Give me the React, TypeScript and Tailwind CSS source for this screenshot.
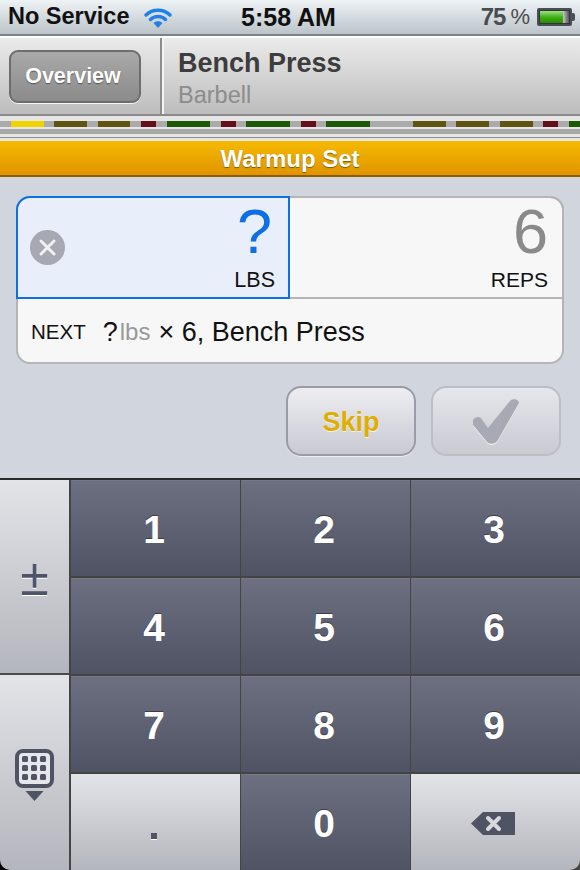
const segments = [
  "ml-[11px] w-[33px] bg-[#f0d400]",
  "ml-[10px] w-[33px] bg-[#5f5510]",
  "ml-[11px] w-[32px] bg-[#5f5510]",
  "ml-[11px] w-[15px] bg-[#650f1c]",
  "ml-[11px] w-[43px] bg-[#1c5a06]",
  "ml-[11px] w-[15px] bg-[#650f1c]",
  "ml-[10px] w-[44px] bg-[#1c5a06]",
  "ml-[11px] w-[15px] bg-[#650f1c]",
  "ml-[10px] w-[44px] bg-[#1c5a06]",
  "ml-[43px] w-[33px] bg-[#5f5510]",
  "ml-[10px] w-[33px] bg-[#5f5510]",
  "ml-[11px] w-[33px] bg-[#5f5510]",
  "ml-[10px] w-[15px] bg-[#650f1c]",
  "ml-[11px] w-[11px] bg-[#1c5a06]",
];

const darkKey =
  "flex items-center justify-center border-t border-t-[#767a88] bg-gradient-to-b from-[#6c7080] to-[#4f5364] pt-[4px] pr-[3px] text-[39px] font-bold text-white [text-shadow:0_-1px_0_#3a3d4a]";
const lightKey =
  "flex items-center justify-center bg-gradient-to-b from-[#e3e4e8] to-[#b4b6bd]";

function Wifi() {
  return (
    <svg width="30" height="23" viewBox="0 0 30 23" className="ml-[14px]">
      <path d="M3 9C9.500 2.500 20.500 2.500 27 9" fill="none" stroke="#1f80e8" strokeWidth="3.500" strokeLinecap="round" />
      <path d="M7.500 13.500C11.500 9.500 18.500 9.500 22.500 13.500" fill="none" stroke="#1f80e8" strokeWidth="3.500" strokeLinecap="round" />
      <path d="M10.500 17C13 14.500 17 14.500 19.500 17L15 22Z" fill="#1f80e8" />
    </svg>
  );
}

function Battery() {
  return (
    <div className="ml-[7px] flex items-center">
      <div className="flex h-[18px] w-[35px] rounded-[2px] border-2 border-[#4a4f55] bg-[#30343a] p-px">
        <div className="w-[23px] bg-gradient-to-b from-[#9be27a] via-[#3fb010] to-[#2c8a08]" />
        <div className="flex-1 bg-gradient-to-r from-[#c8c8c8] to-[#555]" />
      </div>
      <div className="h-[8px] w-[3px] rounded-r-[2px] bg-[#4a4f55]" />
    </div>
  );
}

function StatusBar() {
  return (
    <div className="relative flex h-[36px] items-center border-b-2 border-b-[#7d8286] bg-gradient-to-b from-[#eef3f6] to-[#bcc4c9] pl-[8px] pr-[5px]">
      <span className="text-[23.5px] font-bold leading-none text-[#111]">No Service</span>
      <Wifi />
      <span className="absolute left-[241px] top-[5px] text-[25px] font-bold leading-none text-[#111]">5:58 AM</span>
      <span className="ml-auto text-[24px] font-bold leading-none tracking-[-1px] text-[#4a4d50]">75</span>
      <span className="ml-[5px] text-[22px] leading-none text-[#4a4d50]">%</span>
      <Battery />
    </div>
  );
}

function Header() {
  return (
    <div className="flex h-[80px] border-t-2 border-b-2 border-t-white border-b-[#8a8a8a] bg-gradient-to-b from-[#ebebeb] to-[#bdbdbd]">
      <div className="flex w-[160px] items-center pl-[9px]">
        <button className="flex h-[53px] w-[132px] items-center justify-center rounded-[9px] border-2 border-[#6d6d6d] bg-gradient-to-b from-[#a9a9a9] to-[#8b8b8b] pr-[4px] text-[21.500px] font-bold text-white shadow-[0_1px_0_#f5f5f5] [text-shadow:0_1px_1px_#555]">
          Overview
        </button>
      </div>
      <div className="w-[2px] bg-[#8d8d8d]" />
      <div className="w-[2px] bg-[#f4f4f4]" />
      <div className="flex flex-col pl-[14px] pt-[9px]">
        <span className="text-[27px] font-bold leading-[33px] text-[#3d3d3d]">Bench Press</span>
        <span className="text-[23.500px] leading-[30px] text-[#8c8c8c]">Barbell</span>
      </div>
    </div>
  );
}

function Track() {
  return (
    <div className="flex h-[25px] flex-col bg-[#e6e6e6] pt-[5px]">
      <div className="flex h-[6px] bg-[#ababab]">
        {segments.map((cls, i) => (
          <div key={i} className={cls} />
        ))}
      </div>
      <div className="mt-[2px] h-[5px] bg-[#a8a8a8]" />
      <div className="mt-[3px] h-[1px] bg-[#8d8d8d]" />
    </div>
  );
}

function WarmupBar() {
  return (
    <div className="flex h-[36px] items-center justify-center border-b-2 border-b-[#8f5d00] bg-gradient-to-b from-[#f6ba00] to-[#e09400] pt-[1px] text-[24px] font-bold text-white [text-shadow:0_1px_1px_#7a5a10]">
      Warmup Set
    </div>
  );
}

function EntryCard() {
  return (
    <div className="mx-[16px] mt-[19px] h-[168px] rounded-[14px] border-2 border-[#b5b5b5] bg-[#f7f7f7]">
      <div className="-mx-[2px] -mt-[2px] flex h-[103px]">
        <div className="relative flex w-[274px] flex-col items-end rounded-tl-[14px] border-2 border-[#0e6ee6] bg-[#e9eefb] pr-[13px]">
          <div className="absolute left-[12px] top-[32px] flex h-[35px] w-[35px] items-center justify-center rounded-full bg-[#a6a9b2]">
            <svg width="19" height="19" viewBox="0 0 19 19">
              <path d="M3 3L16 16M16 3L3 16" stroke="#f0f1f4" strokeWidth="3" strokeLinecap="round" />
            </svg>
          </div>
          <span className="mr-[3px] mt-[-2px] h-[66px] text-[63px] font-normal leading-[70px] text-[#0e6ee6]">?</span>
          <span className="mt-[4px] text-[21.500px] leading-[28px] text-[#111]">LBS</span>
        </div>
        <div className="flex flex-1 flex-col items-end rounded-tr-[14px] border-y-2 border-r-2 border-y-[#b5b5b5] border-r-[#b5b5b5] pr-[14px]">
          <span className="mt-[-2px] h-[66px] text-[63px] leading-[70px] text-[#8a8a8a]">6</span>
          <span className="mt-[4px] text-[21px] leading-[28px] text-[#111]">REPS</span>
        </div>
      </div>
      <div className="flex h-[63px] items-center pl-[13px] pt-[3px]">
        <span className="text-[20.500px] text-[#111]">NEXT</span>
        <span className="ml-[17px] text-[27px] text-[#111]">?</span>
        <span className="ml-[2px] text-[24px] text-[#999]">lbs</span>
        <span className="ml-[8px] text-[27px] text-[#111]">× 6, Bench Press</span>
      </div>
    </div>
  );
}

function ActionButtons() {
  return (
    <div className="mr-[19px] mt-[22px] flex justify-end gap-[15px]">
      <button className="flex h-[70px] w-[130px] items-center justify-center rounded-[15px] border-2 border-[#9a9ba6] bg-gradient-to-b from-[#eeeef2] to-[#c8c9d2] pt-[2px] text-[27px] font-bold text-[#dfae00] shadow-[0_1px_0_#eceef2] [text-shadow:0_1px_0_#f5f5f5]">
        Skip
      </button>
      <button className="flex h-[70px] w-[130px] items-center justify-center rounded-[15px] border-2 border-[#bcbec6] bg-gradient-to-b from-[#e6e7ec] to-[#c9cad2]">
        <svg width="48" height="48" viewBox="0 0 48 48" className="drop-shadow-[0_1px_0_#f5f5f5]">
          <path d="M1 23C3 20 7 19 9 21L16 31L38 4C40 1 47 2 47 6L26 43C24 47 18 48 15 45L1 28Z" fill="#a8aab3" />
        </svg>
      </button>
    </div>
  );
}

function PlusMinusKey() {
  return (
    <div className={`${lightKey} h-[195px] border-b-2 border-b-[#4a4a4a]`}>
      <span className="text-[52px] leading-none text-[#4f5468] [text-shadow:0_1px_0_#fff]">±</span>
    </div>
  );
}

function KeyboardToggleKey() {
  return (
    <div className={`${lightKey} flex-1 flex-col pt-[5px]`}>
      <svg width="39" height="53" viewBox="0 0 39 53">
        <rect x="2" y="2" width="35" height="35" rx="6" fill="#e6e7eb" stroke="#4f5364" strokeWidth="4" />
        {[10, 19, 28].map((y) =>
          [10, 19, 28].map((x) => <rect key={`${x}-${y}`} x={x - 3} y={y - 3} width="6" height="6" rx="1.500" fill="#4f5364" />)
        )}
        <path d="M10.500 42H28.500L19.500 52Z" fill="#4f5364" />
      </svg>
    </div>
  );
}

function Keypad() {
  return (
    <div className="grid shrink-0 grid-cols-[169px_169px_169px] grid-rows-[98px_98px_98px_96px] gap-x-px bg-[#444]">
      {["1", "2", "3", "4", "5", "6", "7", "8", "9"].map((n) => (
        <div key={n} className={`${darkKey} border-b-2 border-b-[#444]`}>
          {n}
        </div>
      ))}
      <div className={lightKey}>
        <div className="mr-[3px] mt-[28px] h-[6px] w-[6px] bg-[#4f5364] shadow-[0_1px_0_#fff]" />
      </div>
      <div className={darkKey}>0</div>
      <div className={`${lightKey} rounded-br-[10px]`}>
        <svg width="44" height="24" viewBox="0 0 44 24" className="mr-[5px] mt-[3px]">
          <path d="M0 11.500L12 0H44V23H12Z" fill="#4f5364" />
          <path d="M17 6L28 17M28 6L17 17" stroke="#d8d9de" strokeWidth="4" strokeLinecap="round" />
        </svg>
      </div>
    </div>
  );
}

export default function App() {
  return (
    <div className="flex h-[870px] w-[580px] flex-col overflow-hidden bg-[#d1d5dd] font-['Liberation_Sans',sans-serif]">
      <StatusBar />
      <Header />
      <Track />
      <WarmupBar />
      <div className="h-[301px]">
        <EntryCard />
        <ActionButtons />
      </div>
      <div className="flex flex-1 border-t-2 border-t-[#2a2a2a] bg-black">
        <div className="flex w-[69px] shrink-0 flex-col overflow-hidden rounded-bl-[10px]">
          <PlusMinusKey />
          <KeyboardToggleKey />
        </div>
        <div className="w-[2px] shrink-0 bg-[#444]" />
        <Keypad />
      </div>
    </div>
  );
}
